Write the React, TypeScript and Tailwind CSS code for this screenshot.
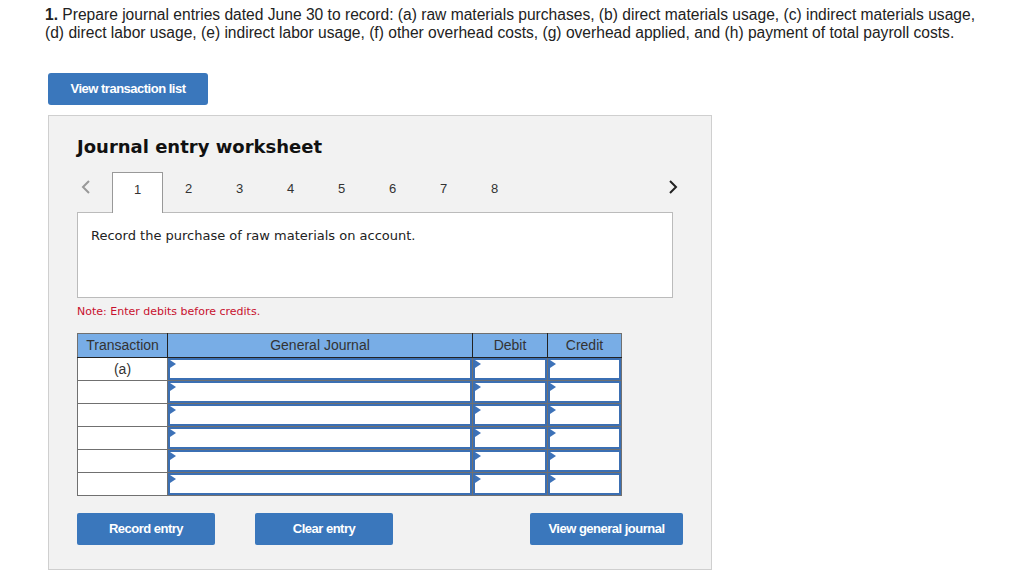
import React from "react";

const Tri = () => (
  <svg className="absolute left-0 top-0" width="6" height="8" viewBox="0 0 6 8">
    <polygon points="0,0 6,4 0,8" fill="#3d72b8" />
  </svg>
);

const InputCell = ({ w }: { w: string }) => (
  <td className={`border border-[#707070] p-0 h-[23px] ${w}`}>
    <div className="relative h-full w-full border-2 border-[#3b6fb3] bg-white">
      <Tri />
    </div>
  </td>
);

export default function App() {
  const rows = ["(a)", "", "", "", "", ""];
  return (
    <div className="min-h-[577px] w-[1014px] bg-white pt-[6px]" style={{ fontFamily: "'Liberation Sans', Arial, sans-serif" }}>
      <p className="pl-[45px] pr-[10px] text-[15.6px] leading-[18px] text-[#222] whitespace-nowrap">
        <span className="font-bold">1.</span> Prepare journal entries dated June 30 to record: (a) raw materials purchases, (b) direct materials usage, (c) indirect materials usage,
        <br />
        (d) direct labor usage, (e) indirect labor usage, (f) other overhead costs, (g) overhead applied, and (h) payment of total payroll costs.
      </p>
      <div className="ml-[48px] mt-[31px]">
        <button className="flex h-[32px] w-[160px] items-center justify-center rounded-[3px] bg-[#3a77bc] text-[13px] font-bold tracking-[-0.5px] text-white">
          View transaction list
        </button>
        <div className="mt-[10px] h-[455px] w-[664px] border border-[#cfcfcf] bg-[#f2f2f2] px-[28px] pt-[19px]">
          <h2 className="text-[18px] font-bold leading-[24px] text-[#111]" style={{ fontFamily: "'DejaVu Sans', Verdana, sans-serif" }}>
            Journal entry worksheet
          </h2>
          <div className="relative z-10 mt-[13px] flex h-[41px] items-stretch">
            <div className="flex w-[35px] items-start pl-[4px] pt-[8px]">
              <svg width="10" height="14" viewBox="0 0 10 14">
                <polyline points="8,1 2,7 8,13" fill="none" stroke="#999" strokeWidth="2" />
              </svg>
            </div>
            {[1, 2, 3, 4, 5, 6, 7, 8].map((n) => (
              <div
                key={n}
                className={`flex w-[51px] justify-center pt-[7px] text-[13px] text-[#333] ${
                  n === 1 ? "border border-b-0 border-[#999] bg-white" : ""
                }`}
              >
                {n}
              </div>
            ))}
            <div className="ml-auto flex w-[15px] items-start pt-[8px]">
              <svg width="10" height="14" viewBox="0 0 10 14">
                <polyline points="2,1 8,7 2,13" fill="none" stroke="#222" strokeWidth="2" />
              </svg>
            </div>
          </div>
          <div
            className="-mt-px h-[86px] w-[596px] border border-[#bbb] bg-white px-[13px] pt-[13px] text-[13px] text-[#222]"
            style={{ fontFamily: "'DejaVu Sans', Verdana, sans-serif" }}
          >
            Record the purchase of raw materials on account.
          </div>
          <p className="mt-[7px] text-[11px] leading-[14px] text-[#c8102e]" style={{ fontFamily: "'DejaVu Sans', Verdana, sans-serif" }}>
            Note: Enter debits before credits.
          </p>
          <table className="mt-[14px] border-collapse text-[14px] text-[#333]">
            <thead>
              <tr className="h-[24px] bg-[#78ade6]">
                <th className="w-[90px] border border-[#707070] border-r-[#222] border-b-[#222] p-0 font-normal">Transaction</th>
                <th className="w-[305px] border border-[#707070] border-x-[#222] border-b-[#222] p-0 font-normal">General Journal</th>
                <th className="w-[75px] border border-[#707070] border-x-[#222] border-b-[#222] p-0 font-normal">Debit</th>
                <th className="w-[74px] border border-[#707070] border-l-[#222] border-b-[#222] p-0 font-normal">Credit</th>
              </tr>
            </thead>
            <tbody>
              {rows.map((r, i) => (
                <tr key={i}>
                  <td className="h-[23px] w-[90px] border border-[#707070] bg-white p-0 text-center">{r}</td>
                  <InputCell w="w-[305px]" />
                  <InputCell w="w-[75px]" />
                  <InputCell w="w-[74px]" />
                </tr>
              ))}
            </tbody>
          </table>
          <div className="mt-[17px] flex">
            <button className="flex h-[32px] w-[138px] items-center justify-center rounded-[2px] bg-[#3a77bc] text-[13px] font-bold tracking-[-0.5px] text-white">
              Record entry
            </button>
            <button className="ml-[40px] flex h-[32px] w-[138px] items-center justify-center rounded-[2px] bg-[#3a77bc] text-[13px] font-bold tracking-[-0.5px] text-white">
              Clear entry
            </button>
            <button className="ml-auto flex h-[32px] w-[153px] items-center justify-center rounded-[2px] bg-[#3a77bc] text-[13px] font-bold tracking-[-0.5px] text-white">
              View general journal
            </button>
          </div>
        </div>
      </div>
    </div>
  );
}
